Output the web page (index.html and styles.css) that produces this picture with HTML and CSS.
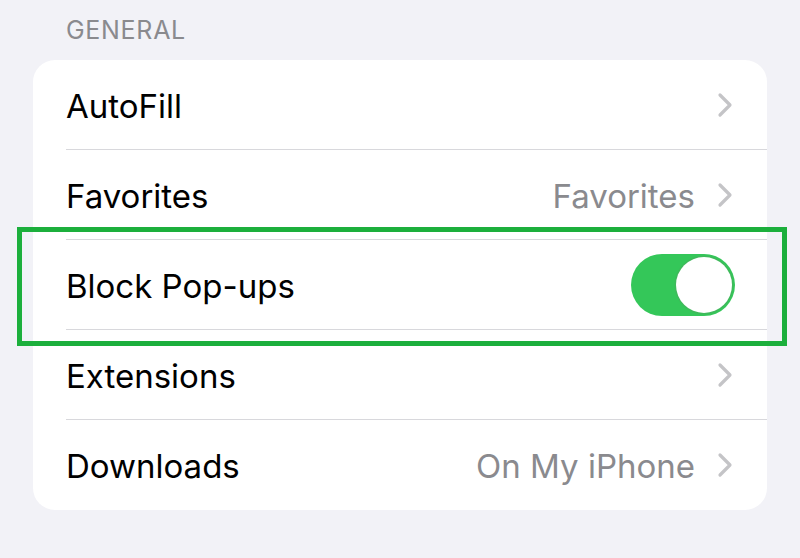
FILE: index.html
```html
<!DOCTYPE html>
<html>
<head>
<meta charset="utf-8">
<link rel="stylesheet" href="styles.css">
</head>
<body>
<div class="page">
  <div class="section-title">GENERAL</div>
  <div class="card">
    <div class="row">
      <span class="label">AutoFill</span>
      <span class="right"><svg class="chev" viewBox="0 0 16 26"><path d="M3 3 L13 13 L3 23" fill="none" stroke="#c4c4c7" stroke-width="3.2" stroke-linecap="round" stroke-linejoin="round"/></svg></span>
    </div>
    <div class="row">
      <span class="label">Favorites</span>
      <span class="right"><span class="value">Favorites</span><svg class="chev" viewBox="0 0 16 26"><path d="M3 3 L13 13 L3 23" fill="none" stroke="#c4c4c7" stroke-width="3.2" stroke-linecap="round" stroke-linejoin="round"/></svg></span>
    </div>
    <div class="row">
      <span class="label">Block Pop-ups</span>
      <span class="right"><span class="toggle"><span class="knob"></span></span></span>
    </div>
    <div class="row">
      <span class="label">Extensions</span>
      <span class="right"><svg class="chev" viewBox="0 0 16 26"><path d="M3 3 L13 13 L3 23" fill="none" stroke="#c4c4c7" stroke-width="3.2" stroke-linecap="round" stroke-linejoin="round"/></svg></span>
    </div>
    <div class="row last">
      <span class="label">Downloads</span>
      <span class="right"><span class="value">On My iPhone</span><svg class="chev" viewBox="0 0 16 26"><path d="M3 3 L13 13 L3 23" fill="none" stroke="#c4c4c7" stroke-width="3.2" stroke-linecap="round" stroke-linejoin="round"/></svg></span>
    </div>
  </div>
  <div class="highlight"></div>
</div>
</body>
</html>
```

FILE: styles.css
```css
html, body {
  margin: 0;
  padding: 0;
  background: #f2f2f7;
  width: 800px;
  height: 558px;
  overflow: hidden;
  font-family: Inter, "Liberation Sans", sans-serif;
}
.page {
  position: relative;
  padding-top: 14px;
}
.section-title {
  padding-left: 66px;
  font-size: 25px;
  line-height: 32px;
  color: #8a8a8e;
  letter-spacing: 0.7px;
  height: 32px;
  margin-bottom: 14px;
}
.card {
  margin-left: 33px;
  width: 734px;
  background: #ffffff;
  border-radius: 22px;
  padding-left: 33px;
  box-sizing: border-box;
}
.row {
  height: 90px;
  display: flex;
  align-items: center;
  justify-content: space-between;
  border-bottom: 1px solid #d8d8dc;
  box-sizing: border-box;
  padding-right: 33px;
}
.row.last {
  border-bottom: none;
}
.label {
  font-size: 33px;
  color: #000000;
  padding-top: 2px;
}
.right {
  display: flex;
  align-items: center;
}
.value {
  font-size: 33px;
  color: #8a8a8e;
  margin-right: 22px;
  padding-top: 2px;
}
.chev {
  width: 16px;
  height: 26px;
  margin-right: 1px;
}
.toggle {
  width: 104px;
  height: 62px;
  border-radius: 31px;
  background: #34c759;
  position: relative;
  display: block;
  margin-right: -1px;
}
.knob {
  position: absolute;
  right: 3px;
  top: 3px;
  width: 56px;
  height: 56px;
  border-radius: 50%;
  background: #ffffff;
  box-shadow: 0 0 0 1.5px #3fb95b;
}
.highlight {
  position: absolute;
  left: 17px;
  top: 227px;
  width: 770px;
  height: 119px;
  border: 5px solid #1caf3c;
  box-sizing: border-box;
}
```
